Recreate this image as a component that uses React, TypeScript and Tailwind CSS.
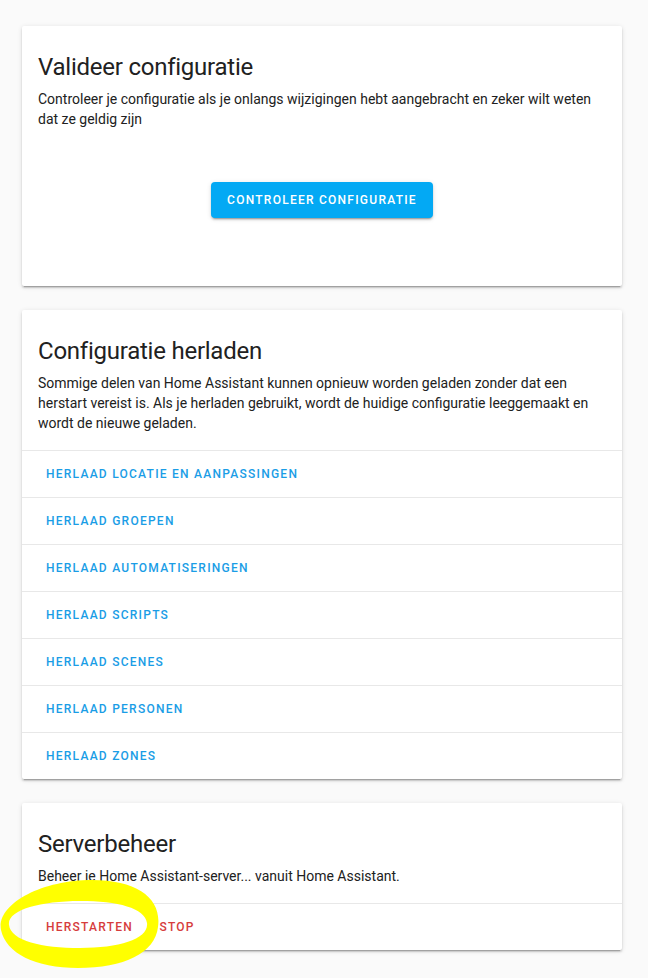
import React from "react";

const reloadItems = [
  "Herlaad locatie en aanpassingen",
  "Herlaad groepen",
  "Herlaad automatiseringen",
  "Herlaad scripts",
  "Herlaad scenes",
  "Herlaad personen",
  "Herlaad zones",
];

const cardClass =
  "w-[600px] ml-[22px] bg-white rounded-[2px] shadow-[0_2px_2px_0_rgba(0,0,0,0.14),0_1px_5px_0_rgba(0,0,0,0.12),0_3px_1px_-2px_rgba(0,0,0,0.2)]";

function CardHeader({ title }: { title: string }) {
  return (
    <h2 className="px-4 text-[24px] leading-8 font-normal text-[#212121] tracking-[-0.01em] mb-[6px]">
      {title}
    </h2>
  );
}

function TextButton({ label, color }: { label: string; color: string }) {
  return (
    <button
      className={`h-9 min-w-[64px] px-2 rounded text-[12px] font-medium uppercase tracking-[1.25px] ${color}`}
    >
      {label}
    </button>
  );
}

export default function App() {
  return (
    <div
      className="min-h-[978px] bg-[#fafafa] pt-[26px] pb-6 flex flex-col gap-6"
      style={{ fontFamily: "Roboto, 'Noto Sans', sans-serif" }}
    >
      {/* Validate */}
      <div className={`${cardClass} pt-[25px]`}>
        <CardHeader title="Valideer configuratie" />
        <p className="px-4 text-[14px] leading-5 text-[#212121]">
          Controleer je configuratie als je onlangs wijzigingen hebt aangebracht en zeker wilt weten
          dat ze geldig zijn
        </p>
        <div className="flex justify-center mt-[53px] mb-[68px]">
          <button className="h-9 px-4 rounded bg-[#03a9f4] text-white text-[12px] font-medium uppercase tracking-[1.25px] shadow-[0_3px_1px_-2px_rgba(0,0,0,0.2),0_2px_2px_0_rgba(0,0,0,0.14),0_1px_5px_0_rgba(0,0,0,0.12)]">
            Controleer configuratie
          </button>
        </div>
      </div>

      {/* Reload */}
      <div className={`${cardClass} pt-[25px]`}>
        <CardHeader title="Configuratie herladen" />
        <p className="px-4 pb-[17px] text-[14px] leading-5 text-[#212121]">
          Sommige delen van Home Assistant kunnen opnieuw worden geladen zonder dat een herstart
          vereist is. Als je herladen gebruikt, wordt de huidige configuratie leeggemaakt en wordt de
          nieuwe geladen.
        </p>
        {reloadItems.map((item) => (
          <div key={item} className="border-t border-[#e8e8e8] py-[5px] px-4 flex">
            <TextButton label={item} color="text-[#1a9de6]" />
          </div>
        ))}
      </div>

      {/* Server */}
      <div className={`${cardClass} pt-[25px]`}>
        <CardHeader title="Serverbeheer" />
        <p className="px-4 pb-[17px] text-[14px] leading-5 text-[#212121]">
          Beheer je Home Assistant-server... vanuit Home Assistant.
        </p>
        <div className="border-t border-[#e8e8e8] py-[5px] px-4 flex gap-1">
          <TextButton label="Herstarten" color="text-[#d63c3c]" />
          <TextButton label="Stop" color="text-[#d63c3c]" />
        </div>
      </div>

      {/* yellow marker annotation */}
      <svg
        className="absolute left-0 top-[875px] pointer-events-none"
        width="170"
        height="100"
        viewBox="0 0 170 100"
      >
        <path
          fillRule="evenodd"
          fill="#ffff00"
          d="M1 55 C-4 30 40 5 92 5 C138 5 162 24 158 52 C155 78 124 93 78 93 C35 93 6 78 1 55 Z M9 50 C11 66 42 73 80 73 C120 73 149 64 147 48 C145 33 118 26 80 26 C40 26 7 35 9 50 Z"
        />
      </svg>
    </div>
  );
}
